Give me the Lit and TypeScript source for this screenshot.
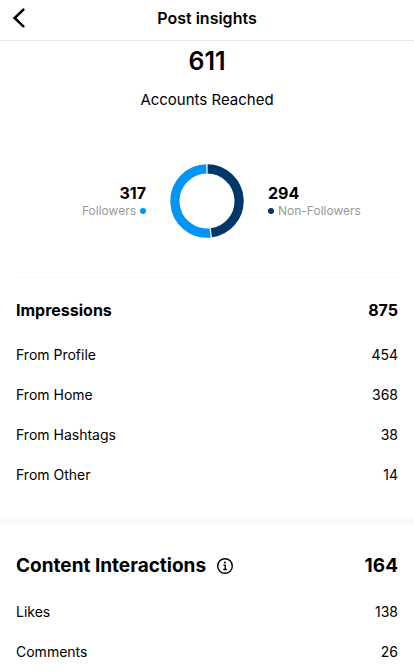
import { LitElement, html, css, svg } from "lit";
import { customElement, property } from "lit/decorators.js";

interface Metric {
  label: string;
  value: number;
}

interface Slice extends Metric {
  color: string;
}

const nonFollowers: Slice = { label: "Non-Followers", value: 294, color: "#00376b" };
const followers: Slice = { label: "Followers", value: 317, color: "#0095f6" };

const impressions: Metric[] = [
  { label: "From Profile", value: 454 },
  { label: "From Home", value: 368 },
  { label: "From Hashtags", value: 38 },
  { label: "From Other", value: 14 },
];

const interactions: Metric[] = [
  { label: "Likes", value: 138 },
  { label: "Comments", value: 26 },
];

@customElement("donut-chart")
export class DonutChart extends LitElement {
  @property({ attribute: false }) slices: Slice[] = [];

  static styles = css`
    :host {
      display: block;
      width: 74px;
      height: 74px;
    }
    svg {
      display: block;
    }
  `;

  render() {
    const c = 37;
    const r = 32.1;
    const total = this.slices.reduce((sum, s) => sum + s.value, 0);
    const at = (angle: number, radius: number) =>
      `${c + radius * Math.sin(angle)} ${c - radius * Math.cos(angle)}`;
    let angle = 0;
    const arcs = this.slices.map((s) => {
      const start = angle;
      angle += (s.value / total) * Math.PI * 2;
      const large = angle - start > Math.PI ? 1 : 0;
      return {
        d: `M${at(start, r)}A${r} ${r} 0 ${large} 1 ${at(angle, r)}`,
        gap: `M${at(start, 26)}L${at(start, 38)}`,
        color: s.color,
      };
    });
    return html`
      <svg width="74" height="74" viewBox="0 0 74 74" role="img" aria-label="Accounts reached by follower status">
        ${arcs.map((a) => svg`<path d=${a.d} fill="none" stroke=${a.color} stroke-width="9.2" />`)}
        ${arcs.map((a) => svg`<path d=${a.gap} stroke="#fff" stroke-width="1.2" />`)}
      </svg>
    `;
  }
}

@customElement("metric-table")
export class MetricTable extends LitElement {
  @property({ attribute: false }) rows: Metric[] = [];
  @property() name = "";

  static styles = css`
    :host {
      display: block;
    }
    table {
      width: 100%;
      border-collapse: collapse;
      font-size: 14px;
      line-height: 20px;
    }
    th,
    td {
      padding: 10px 0;
      font-weight: 400;
    }
    th {
      text-align: left;
    }
    td {
      text-align: right;
    }
  `;

  render() {
    return html`
      <table aria-label=${this.name}>
        <tbody>
          ${this.rows.map(
            (m) => html`<tr><th scope="row">${m.label}</th><td>${m.value}</td></tr>`
          )}
        </tbody>
      </table>
    `;
  }
}

@customElement("app-root")
export class AppRoot extends LitElement {
  static styles = css`
    :host {
      display: block;
      background: #fff;
      color: #000;
      font-family: Inter, "Liberation Sans", sans-serif;
    }
    h1,
    h2,
    p {
      margin: 0;
    }
    button {
      display: block;
      padding: 0;
      border: 0;
      background: none;
      color: inherit;
      cursor: pointer;
    }
    svg {
      display: block;
    }
    .bar {
      display: grid;
      grid-template-columns: 40px 1fr 40px;
      align-items: center;
      height: 40px;
      border-bottom: 1px solid #e6e6e6;
    }
    .back {
      padding: 4px 8px 8px;
    }
    .bar h1 {
      padding-bottom: 4px;
      font-size: 16px;
      line-height: 20px;
      font-weight: 600;
      text-align: center;
    }
    .reach {
      margin: 0 16px;
      padding: 4px 0 39px;
      border-bottom: 1px solid #f8f8f8;
      text-align: center;
    }
    .total {
      font-size: 25px;
      line-height: 32px;
      font-weight: 600;
    }
    .caption {
      padding: 13px 0 54px;
      font-size: 15px;
      line-height: 20px;
    }
    .split {
      display: grid;
      grid-template-columns: 1fr 74px 1fr;
      align-items: center;
      column-gap: 24px;
    }
    .side {
      text-align: right;
    }
    .side.end {
      text-align: left;
    }
    .count {
      font-size: 16px;
      line-height: 20px;
      font-weight: 700;
    }
    .key {
      display: flex;
      align-items: center;
      justify-content: flex-end;
      gap: 4px;
      color: #999;
      font-size: 12px;
      line-height: 16px;
    }
    .end .key {
      flex-direction: row-reverse;
    }
    .dot {
      width: 6px;
      height: 6px;
      border-radius: 50%;
    }
    .block {
      padding: 20px 16px 0;
    }
    .block + .block {
      margin-top: 23px;
      padding-top: 30px;
      border-top: 6px solid #fafafa;
    }
    .head {
      display: flex;
      align-items: center;
      justify-content: space-between;
      padding-bottom: 13px;
      font-size: 16px;
      line-height: 24px;
      font-weight: 700;
    }
    .head.large {
      padding-bottom: 14px;
      font-size: 19px;
    }
    .head h2 {
      font: inherit;
    }
    .name {
      display: flex;
      align-items: center;
      gap: 10px;
    }
  `;

  private side(slice: Slice, cls: string) {
    return html`
      <div class="side ${cls}">
        <p class="count">${slice.value}</p>
        <p class="key">
          <span>${slice.label}</span>
          <span class="dot" style="background:${slice.color}"></span>
        </p>
      </div>
    `;
  }

  render() {
    return html`
      <header class="bar">
        <button class="back" aria-label="Back">
          <svg width="24" height="24" viewBox="0 0 24 24" fill="none" stroke="currentColor" stroke-width="2.5" stroke-linecap="round" stroke-linejoin="miter">
            <path d="M15.4 3.6 6.6 12l8.8 8.4" />
          </svg>
        </button>
        <h1>Post insights</h1>
      </header>
      <main>
        <section class="reach">
          <p class="total">611</p>
          <p class="caption">Accounts Reached</p>
          <div class="split">
            ${this.side(followers, "")}
            <donut-chart .slices=${[nonFollowers, followers]}></donut-chart>
            ${this.side(nonFollowers, "end")}
          </div>
        </section>
        <section class="block">
          <div class="head">
            <h2>Impressions</h2>
            <span>875</span>
          </div>
          <metric-table name="Impressions" .rows=${impressions}></metric-table>
        </section>
        <section class="block">
          <div class="head large">
            <div class="name">
              <h2>Content Interactions</h2>
              <button aria-label="About content interactions">
                <svg width="18" height="18" viewBox="0 0 18 18" fill="none" stroke="currentColor">
                  <circle cx="9" cy="9" r="7.3" stroke-width="1.4" />
                  <circle cx="8.9" cy="5.6" r="1" fill="currentColor" stroke="none" />
                  <path d="M7.4 8.1h1.8v4.3M7.2 12.5h3.7" stroke-width="1.3" />
                </svg>
              </button>
            </div>
            <span>164</span>
          </div>
          <metric-table name="Content Interactions" .rows=${interactions}></metric-table>
        </section>
      </main>
    `;
  }
}
